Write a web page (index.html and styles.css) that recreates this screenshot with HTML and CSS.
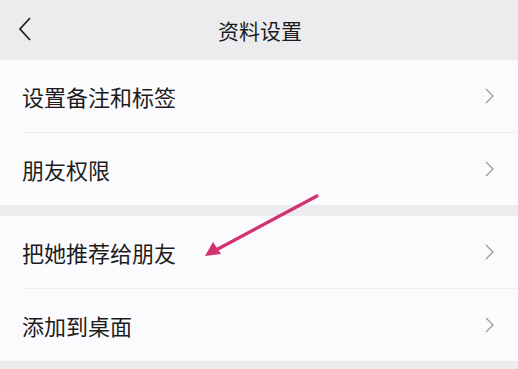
FILE: index.html
```html
<!DOCTYPE html>
<html lang="zh-CN">
<head>
    <meta charset="UTF-8">
    <title>资料设置</title>
    <meta name="viewport" content="width=device-width, initial-scale=1">
    <link rel="stylesheet" href="styles.css">
</head>
<body>

    <div class="header">
        <span class="back">
            <svg width="14" height="24" viewBox="0 0 14 24"><path d="M12 1 L2 12 L12 23" fill="none" stroke="#222" stroke-width="1.8"/></svg>
        </span>
        <span class="title">资料设置</span>
    </div>

    <div class="group">
        <div class="row">
            <span>设置备注和标签</span>
            <svg class="chev" width="9" height="16" viewBox="0 0 9 16"><path d="M1 1 L8 8 L1 15" fill="none" stroke="#999" stroke-width="1.3"/></svg>
        </div>
        <div class="row">
            <span>朋友权限</span>
            <svg class="chev" width="9" height="16" viewBox="0 0 9 16"><path d="M1 1 L8 8 L1 15" fill="none" stroke="#999" stroke-width="1.3"/></svg>
        </div>
    </div>

    <div class="group">
        <div class="row">
            <span>把她推荐给朋友</span>
            <svg class="chev" width="9" height="16" viewBox="0 0 9 16"><path d="M1 1 L8 8 L1 15" fill="none" stroke="#999" stroke-width="1.3"/></svg>
        </div>
        <div class="row">
            <span>添加到桌面</span>
            <svg class="chev" width="9" height="16" viewBox="0 0 9 16"><path d="M1 1 L8 8 L1 15" fill="none" stroke="#999" stroke-width="1.3"/></svg>
        </div>
    </div>

    <!-- annotation arrow over the list -->
    <svg class="arrow" width="518" height="369" viewBox="0 0 518 369">
        <line x1="317" y1="196" x2="216" y2="250" stroke="#d2336e" stroke-width="3.2" stroke-linecap="round"/>
        <polygon points="205,256 213,242 221,254" fill="#d2336e"/>
    </svg>

</body>
</html>
```

FILE: styles.css
```css
body {
    font-family: "Noto Sans CJK SC", "Noto Sans", sans-serif;
    margin: 0;
    background: #ececef;
    color: #1c1c1c;
    height: 369px;
    overflow: hidden;
    position: relative;
}

.header {
    height: 60px;
    display: flex;
    align-items: center;
    justify-content: center;
    position: relative;
    background: #ececef;
}

.back {
    position: absolute;
    left: 18px;
    top: 17px;
}

.title {
    font-size: 21px;
    margin-left: 2px;
}

.group {
    background: #fbfbfd;
    margin-bottom: 11px;
}

.row {
    height: 72px;
    margin-left: 22px;
    padding-right: 24px;
    display: flex;
    align-items: center;
    justify-content: space-between;
    font-size: 22px;
    border-bottom: 1px solid #efeff2;
    box-sizing: border-box;
}

    .row:first-child {
        height: 73px;
    }

    .row:last-child {
        border-bottom: none;
    }

.arrow {
    position: absolute;
    left: 0;
    top: 0;
    pointer-events: none;
}
```
